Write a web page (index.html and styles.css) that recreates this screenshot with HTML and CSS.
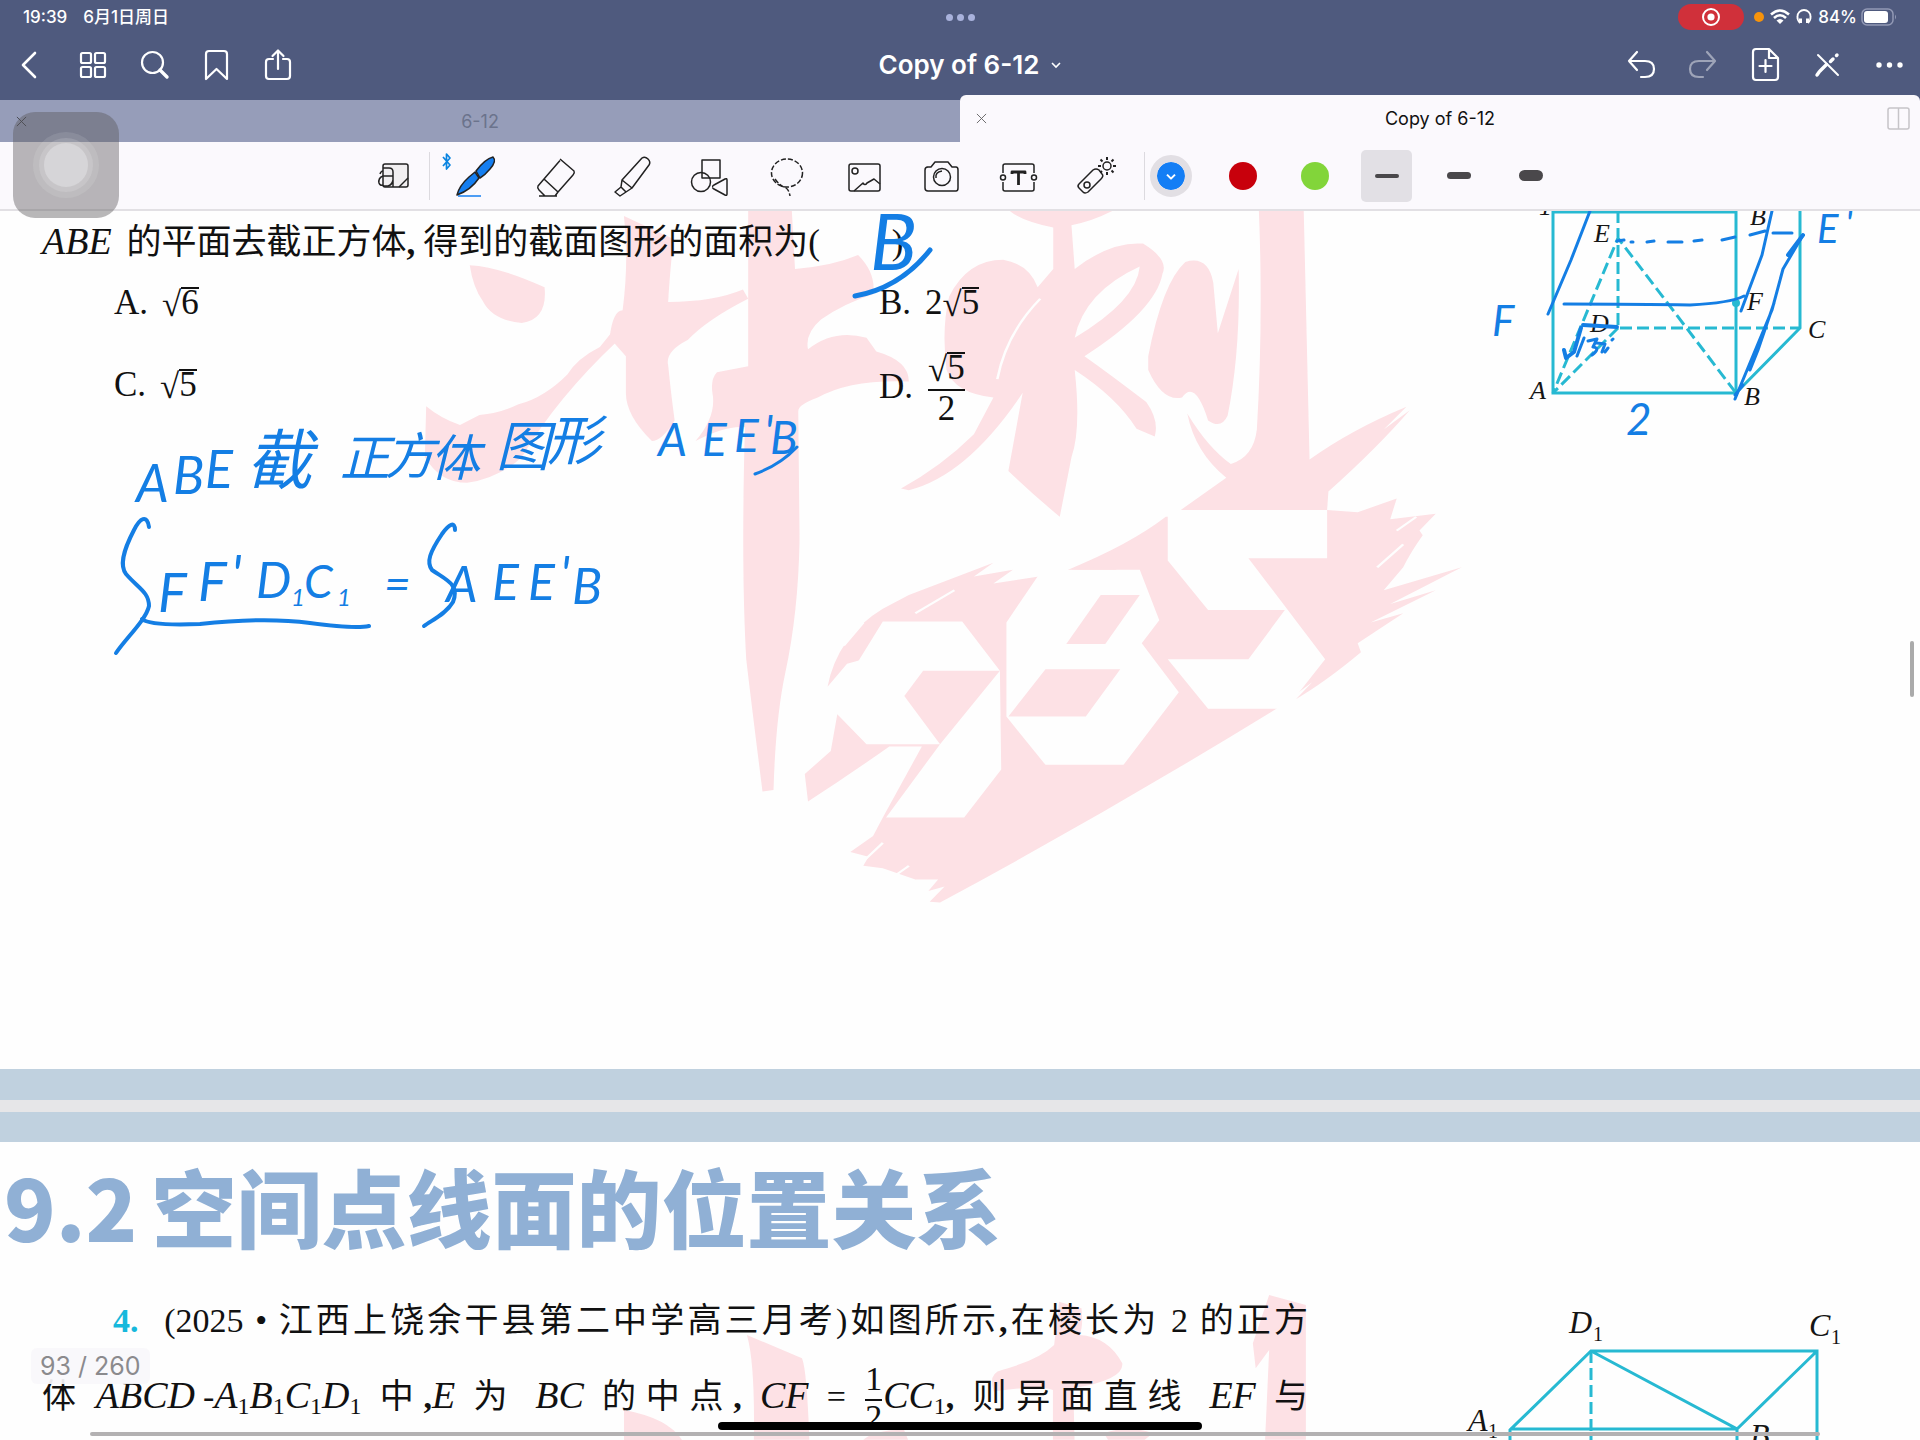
FILE: index.html
```html
<!DOCTYPE html>
<html lang="zh-CN">
<head>
<meta charset="utf-8">
<meta name="viewport" content="width=device-width, initial-scale=1">
<title>Copy of 6-12</title>
<link rel="stylesheet" href="styles.css">
</head>
<body>
<header class="top">
  <div class="status">
    <div class="status-left"><span>19:39</span><span>6月1日周日</span></div>
    <div class="multitask"><i></i><i></i><i></i></div>
    <div class="status-right">
      <span class="record"><svg width="20" height="20" viewBox="0 0 20 20"><circle cx="10" cy="10" r="8" fill="none" stroke="#fff" stroke-width="2"/><circle cx="10" cy="10" r="3.6" fill="#fff"/></svg></span>
      <i class="mic"></i>
      <svg width="20" height="16" viewBox="0 0 20 16" fill="none" stroke="#fff" stroke-width="2.6"><path d="M1 5.5Q10-2.500 19 5.500M4 9Q10 3.500 16 9"/><path d="M10 15L6.500 11.500Q10 8.500 13.500 11.500Z" fill="#fff" stroke="none"/></svg>
      <svg width="16" height="16" viewBox="0 0 16 16" fill="none" stroke="#fff" stroke-width="1.800"><path d="M4 14Q1 11 1.500 7.500A6.500 6.500 0 0 1 14.500 7.500Q15 11 12 14"/><path d="M4.500 9.500V14M11.500 9.500V14" stroke-width="3"/></svg>
      <span>84%</span>
      <svg width="36" height="18" viewBox="0 0 36 18"><rect x="1" y="1" width="31" height="16" rx="5" fill="none" stroke="#9299b5" stroke-width="1.500"/><rect x="3" y="3" width="24" height="12" rx="3" fill="#fff"/><path d="M34 6.500Q36 9 34 11.500Z" fill="#9299b5"/></svg>
    </div>
  </div>
  <nav class="nav">
    <div class="nav-group">
      <button type="button" aria-label="Back"><svg viewBox="0 0 36 36"><path d="M22 6L10 18L22 30" stroke-width="2.600"/></svg></button>
      <button type="button" aria-label="Thumbnails"><svg viewBox="0 0 36 36"><rect x="6" y="6" width="10" height="10" rx="1.500"/><rect x="20" y="6" width="10" height="10" rx="1.500"/><rect x="6" y="20" width="10" height="10" rx="1.500"/><rect x="20" y="20" width="10" height="10" rx="1.500"/></svg></button>
      <button type="button" aria-label="Search"><svg viewBox="0 0 36 36"><circle cx="15.500" cy="15.500" r="10.500"/><path d="M23 23L30 30" stroke-width="3.400"/></svg></button>
      <button type="button" aria-label="Bookmark"><svg viewBox="0 0 36 36"><path d="M7 32V7Q7 4 10 4H25Q28 4 28 7V32L17.500 22Z"/></svg></button>
      <button type="button" aria-label="Share"><svg viewBox="0 0 36 36"><path d="M12 12H8Q5 12 5 15V29Q5 32 8 32H26Q29 32 29 29V15Q29 12 26 12H22M17 22V4M11.500 9L17 3.500L22.500 9"/></svg></button>
    </div>
    <button type="button" class="title">Copy of 6-12<svg viewBox="0 0 12 12"><path d="M2 4L6 8L10 4"/></svg></button>
    <div class="nav-group nav-end">
      <button type="button" aria-label="Undo"><svg viewBox="0 0 36 36"><path d="M14 5L6 14L14 23M6 14H22Q31 14 31 22T22 30H18"/></svg></button>
      <button type="button" aria-label="Redo" disabled><svg viewBox="0 0 36 36"><path d="M22 5L30 14L22 23M30 14H14Q5 14 5 22T14 30H18"/></svg></button>
      <button type="button" aria-label="Add page"><svg viewBox="0 0 36 36"><path d="M9 2H22L31 11V30Q31 33 28 33H9Q6 33 6 30V5Q6 2 9 2ZM22 2V11H31M18.500 13V25M12.500 19H24.500"/></svg></button>
      <button type="button" aria-label="Read only"><svg viewBox="0 0 36 36"><path d="M9 8L29 28" stroke-width="2"/><path d="M8 28L10.500 24.500M11 24L17.500 17.500M21.500 14.500L24 12M27.500 8.500L28 8" stroke-width="3.400"/></svg></button>
      <button type="button" aria-label="More"><svg viewBox="0 0 36 36"><g class="solid"><circle cx="8" cy="18" r="2.700"/><circle cx="18.500" cy="18" r="2.700"/><circle cx="29" cy="18" r="2.700"/></g></svg></button>
    </div>
  </nav>
  <div class="tabs">
    <div class="tab"><button type="button" class="close" aria-label="Close tab"><svg viewBox="0 0 12 12"><path d="M1 1L11 11M11 1L1 11"/></svg></button><span>6-12</span></div>
    <div class="tab active"><button type="button" class="close" aria-label="Close tab"><svg viewBox="0 0 12 12"><path d="M1 1L11 11M11 1L1 11"/></svg></button><span>Copy of 6-12</span><button type="button" class="split" aria-label="Split view"><svg viewBox="0 0 24 24"><rect x="1" y="1" width="21" height="21" rx="2"/><path d="M11.500 1V22"/></svg></button></div>
  </div>
</header>

<div class="toolbar">
  <button type="button" class="zoombox" aria-label="Zoom window"><svg viewBox="0 0 44 44"><rect x="11" y="10" width="25" height="23" rx="2" fill="#f1eff1"/><path d="M36 24L27 33"/><path d="M11 14H17Q21 14 21 18V33M11 22H21M11 32H16Q20 31 21 26"/><path d="M11 22Q6 24 7 29Q8 32 11 31M8 20Q9 17 11 17"/></svg></button>
  <div class="tools">
    <button type="button" aria-label="Pen"><svg viewBox="0 0 60 48"><g transform="translate(-14 0)"><path d="M7 5L14 13L10.500 17V2L14 6L7 14" stroke="#0a84e0" stroke-width="1.700"/><g fill="#147ef0"><path d="M21 43Q23 34 33 25L39 20L43 26Q35 38 21 43Z"/><path d="M40 19Q49 7 57 5Q61 9 54 17Q49 23 44 26Z"/></g><path d="M22 44H45" stroke="#147ef0" stroke-width="1.500"/></g></svg></button>
    <button type="button" aria-label="Eraser"><svg viewBox="0 0 60 48"><path d="M33 7L47 19Q48 21 46 23L31 40L17 27L33 8.500M17 27L11 34Q10 36 12 38L18 44H28L31 40M12 44H30"/></svg></button>
    <button type="button" aria-label="Highlighter"><svg viewBox="0 0 60 48"><path d="M18 28L38 6Q41 4 44 7Q47 10 45 13L28 36ZM18 28L17 35L22 40L28 36M17 35L11 40L16 44L22 40"/></svg></button>
    <button type="button" aria-label="Shapes"><svg viewBox="0 0 60 48"><rect x="21" y="8" width="18" height="18"/><circle cx="20" cy="30" r="9.500"/><path d="M32 35Q31 34 33 33L44 27Q46 26 46 28V42Q46 44 44 43L33 37Q31 36 32 35"/></svg></button>
    <button type="button" aria-label="Lasso"><svg viewBox="0 0 60 48"><g stroke-dasharray="5 2"><ellipse cx="29" cy="21" rx="15.500" ry="14"/><path d="M17 27Q22 34 28 36Q31 38 32 44"/></g></svg></button>
    <button type="button" aria-label="Image"><svg viewBox="0 0 60 48"><rect x="14" y="12" width="31" height="27" rx="2"/><circle cx="20" cy="19" r="3"/><path d="M19 39L28 31Q30 34 32 31L39 27L45 32"/></svg></button>
    <button type="button" aria-label="Camera"><svg viewBox="0 0 60 48"><path d="M15 15H19L23 10H36L40 15H44Q46 15 46 18V36Q46 39 44 39H16Q13 39 13 36V18Q13 15 16 15Z"/><circle cx="30" cy="25" r="8.500"/><path d="M24 26Q23 20 30 19"/></svg></button>
    <button type="button" aria-label="Text"><svg viewBox="0 0 60 48"><path d="M14 21V14Q14 12 16 12H43Q45 12 45 14V21M14 30V37Q14 39 16 39H43Q45 39 45 37V30"/><circle cx="14" cy="25.500" r="2.500"/><circle cx="45" cy="25.500" r="2.500"/><path d="M23 22V20H36V22M29.500 20V33" stroke-width="2.800"/></svg></button>
    <button type="button" aria-label="Laser pointer"><svg viewBox="0 0 60 48"><path d="M13 32L27 18Q30 16 33 18L36 22Q38 24 35 27L22 40Q19 42 17 40L13 36Q11 34 13 32Z"/><circle cx="21" cy="33" r="3"/><circle cx="41" cy="14" r="4"/><path d="M41 5V8M41 20V23M32 14H35M47 14H50M34.500 7.500L36.500 9.500M45.500 18.500L47.500 20.500M47.500 7.500L45.500 9.500M36 19L34.500 20.500" stroke-width="2"/></svg></button>
  </div>
  <div class="pens">
    <button type="button" aria-label="Blue"><span class="dot blue"><svg viewBox="0 0 12 12"><path d="M3 5L6 8L9 5"/></svg></span></button>
    <button type="button" aria-label="Red"><span class="dot red"></span></button>
    <button type="button" aria-label="Green"><span class="dot green"></span></button>
    <button type="button" aria-label="Thin"><span class="width-box"><i class="thin"></i></span></button>
    <button type="button" aria-label="Medium"><i class="medium"></i></button>
    <button type="button" aria-label="Thick"><i class="thick"></i></button>
  </div>
</div>

<main class="canvas">
  <article class="page page-one">
    <svg class="layer" viewBox="0 211 1920 858" width="1920" height="858" aria-hidden="true">
      <g transform="translate(460 200) scale(.6505 .4592)" fill="#fde1e5">
        <path d="M15 142Q60 145 130 190Q135 260 95 268Q50 262 35 220Q20 190 15 142ZM232 290L215 320Q180 345 165 380Q130 430 90 445Q60 465 30 468L0 490Q-30 475-52 449L-54 560Q-30 616 11 616Q60 605 95 560Q150 430 240 310Z"/>
        <path d="M252 35L328 85Q322 170 320 222Q390 222 435 195L443 215Q380 260 350 305Q315 330 320 360Q325 430 330 480Q310 525 295 525Q255 470 255 420V340L230 300Q235 240 250 240Q260 130 252 35Z"/>
        <path d="M443 20H510L515 150Q570 145 612 120Q640 160 635 205Q590 225 555 260Q530 290 535 325Q575 280 625 300L640 330Q690 350 690 395Q600 390 550 430Q520 445 520 460L522 740Q520 900 500 1030Q485 1130 482 1285L465 1288Q450 1120 440 1000Q432 800 438 495Q410 490 362 525Q395 470 388 420Q385 390 395 375L443 362Z"/>
        <path fill-rule="evenodd" d="M842 20H1008Q975 45 940 55L945 150Q1000 90 1050 95Q1090 130 1080 160Q1070 240 960 340Q1000 380 1055 440Q1075 480 1068 515L1040 498Q1010 430 945 370Q955 500 940 560L922 690Q880 640 843 590L865 420Q780 600 690 632L678 628Q740 580 790 510L820 430Q760 420 748 370Q740 280 752 210Q780 130 835 130Q875 140 888 190L912 150V60Q860 45 842 20ZM945 300Q960 200 1045 145Q1040 220 945 300Z"/>
        <path d="M1058 340Q1080 180 1115 135Q1150 120 1158 180L1165 290L1197 150Q1200 330 1180 470Q1170 500 1150 480Q1130 390 1110 430Q1080 440 1058 370ZM1228 20H1297L1306 565Q1370 500 1455 450L1420 500L1460 458Q1410 540 1335 635L1333 675H1108L1178 605Q1130 550 1118 465Q1150 540 1185 575Q1220 560 1225 500Q1235 260 1228 20Z"/>
        <path d="M1333 675L1380 680L1440 650L1430 695L1500 683L1475 720L1480 730Q1460 770 1450 800L1420 850L1540 800L1430 880L1500 850L1400 920L1450 900L1380 965L1385 985Q1330 1050 1285 1087L1310 1050L1255 1108Q1000 1330 738 1530L722 1528L745 1495L720 1505L735 1480L700 1480L650 1455L620 1450L628 1430L600 1420L635 1385L650 1345L710 1190H660Q600 1250 535 1310L530 1250L570 1200L580 1120L625 1185L620 1000L595 1010L565 1060Q580 950 650 890L690 860L820 790L790 820L850 805L820 835L890 820L870 860L935 805Q1030 750 1085 690Z"/>
        <path fill="#fefefe" d="M1088 675H1333V780H1212L1330 1000L1270 1108H1150L1088 1000H1212L1268 893H1150L1088 785ZM650 918H772L830 1025H712L683 1080L738 1185H625L575 1090ZM830 1025L832 1240L775 1345H655L738 1185ZM895 805H1045L1075 915L1048 965L1105 1072L1020 1230H900L840 1125V920Z"/>
        <path d="M985 860H1045L992 967H932ZM900 1022H1015L962 1125H843ZM935 805H1010L1000 798Z"/>
        <path d="M892 215Q840 290 826 390M905 60V150M1390 985L1440 925M1410 800L1450 750M1440 720L1470 690M650 1400L620 1440M690 1450L660 1480M700 900L760 850M590 970L620 920" fill="none" stroke="#fefefe" stroke-width="4"/>
      </g>
    </svg>
    <div class="columns">
      <section class="question">
        <p class="lead"><em>ABE</em> 的平面去截正方体<b>,</b>得到的截面图形的面积为(<span class="blank"></span>).</p>
        <ul class="options">
          <li>A. <math><msqrt><mn>6</mn></msqrt></math></li>
          <li>B. <math><mn>2</mn><msqrt><mn>5</mn></msqrt></math></li>
          <li>C. <math><msqrt><mn>5</mn></msqrt></math></li>
          <li>D. <math displaystyle="true"><mfrac><msqrt><mn>5</mn></msqrt><mn>2</mn></mfrac></math></li>
        </ul>
      </section>
      <svg class="figure" viewBox="1460 211 460 240" width="460" height="240">
        <g class="edge"><path d="M1553 212H1736V393H1553ZM1736 393L1800 328V211"/><path class="dash" d="M1618 211V328H1800M1618 328L1553 393L1618 238L1736 393"/></g>
        <circle cx="1736" cy="303" r="4" fill="#27b9d2"/>
        <g class="label"><text x="1594" y="242">E</text><text x="1750" y="225">B</text><text x="1747" y="310">F</text><text x="1808" y="338">C</text><text x="1590" y="332">D</text><text x="1530" y="399">A</text><text x="1744" y="405">B</text><text x="1539" y="215">1</text></g>
      </svg>
    </div>
    <svg class="layer ink" viewBox="0 211 1920 858" width="1920" height="858">
      <g class="hand">
        <text x="870" y="270" font-size="78">B</text>
        <text x="136 173 205" y="502 494 488" font-size="52">ABE</text>
        <text x="246" y="484" font-size="66">截</text>
        <text x="340 385 430" y="476 474 476" font-size="50">正方体</text>
        <text x="496 547" y="466 460" font-size="54">图形</text>
        <text x="658 702 734 764 770" y="456 456 452 448 454" font-size="46">AEE'B</text>
        <text x="158 198 231" y="612 601 594" font-size="54">FF'</text>
        <text x="256" y="598" font-size="50">D</text>
        <text x="291 337" y="606" font-size="24">11</text>
        <text x="304" y="598" font-size="46">C</text>
        <text x="384" y="600" font-size="46">=</text>
        <text x="446 492 528 560 572" y="602 600 600 592 604" font-size="50">AEE'B</text>
        <text x="1492" y="336" font-size="42">F</text>
        <text x="1817 1845" y="243 238" font-size="40">E'</text>
        <text x="1626" y="435" font-size="44">2</text>
      </g>
      <g class="stroke">
        <path d="M855 296Q900 288 930 250" stroke-width="5"/>
        <path d="M149 527C147 514 140 518 134 530C122 553 120 566 126 574C138 588 149 592 149 606C146 620 126 638 116 653"/>
        <path d="M142 619Q150 626 200 624Q265 617 310 623T369 626"/>
        <path d="M455 530C455 521 449 524 442 534C430 552 426 562 432 570C446 580 460 584 453 602C446 614 432 620 424 626"/>
        <path d="M797 447Q780 465 755 474M1590 211L1571 260L1548 314M1564 304Q1640 304 1690 305Q1730 303 1744 296M1772 211L1762 255L1741 311M1803 235L1783 269L1772 310L1735 399M1774 303L1758 350L1750 370M1743 385L1735 395M1750 235L1765 231M1722 240L1735 237" stroke-width="3"/>
        <path d="M1803 235L1788 255M1583 325L1617 327M1581 328L1574 352L1566 358L1564 350" stroke-width="4"/>
        <path d="M1617 241L1624 240M1631 242H1633M1647 242L1654 241M1668 242H1682M1694 241L1702 240M1773 233H1792M1584 338L1577 356M1588 341L1597 339L1593 347Q1601 348 1592 355M1597 343L1605 344L1602 352M1608 348L1605 352M1612 340L1613 339" stroke-width="3"/>
      </g>
    </svg>
  </article>

  <article class="page page-two">
    <svg class="layer" viewBox="0 1142 1920 298" width="1920" height="298" aria-hidden="true">
      <g fill="#fde1e5"><path transform="translate(700 1270) scale(.408 .333)" d="M115 195L250 265Q262 300 268 510H132Q135 280 115 195ZM880 95L935 115Q940 170 930 195Q1000 200 1035 280Q1040 330 915 355L918 510H865V360Q830 345 720 365Q705 310 740 300Q830 270 868 225ZM1395 75L1485 105V510H1385L1395 240L1362 295L1355 220ZM400 510Q430 480 500 480L510 510ZM990 490Q1050 465 1110 490L1090 510H1000Z"/><path d="M624 1410Q668 1418 682 1440H624Z"/></g>
    </svg>
    <h1><span>9.2</span><span>空间点线面的位置关系</span></h1>
    <div class="columns">
      <section class="question body">
        <p class="first"><strong>4.</strong> (2025 • 江西上饶余干县第二中学高三月考)如图所示<b>,</b>在棱长为 2 的正方</p>
        <p>体<em class="solid-name">ABCD</em>-<em>A</em><sub>1</sub><em>B</em><sub>1</sub><em>C</em><sub>1</sub><em>D</em><sub>1</sub> 中<b>,</b><em>E</em> 为 <em>BC</em> 的中点<b>,</b> <em>CF</em> = <math displaystyle="true"><mfrac><mn>1</mn><mn>2</mn></mfrac></math><em>CC</em><sub>1</sub><b>,</b> 则异面直线 <em>EF</em> 与</p>
      </section>
      <svg class="figure" viewBox="1420 1283 500 157" width="500" height="157">
        <g class="edge"><path d="M1510 1440V1430L1591 1351H1817V1440M1510 1429H1737L1817 1351M1591 1351L1737 1429V1440"/><path class="dash" d="M1591 1351V1440"/></g>
        <g class="label big"><text x="1569" y="1333">D</text><text x="1809" y="1336">C</text><text x="1468" y="1431">A</text><text x="1750" y="1446">B</text></g>
        <g class="label small"><text x="1593" y="1341">1</text><text x="1831" y="1344">1</text><text x="1488" y="1438">1</text></g>
      </svg>
    </div>
  </article>
  <div class="page-count">93 / 260</div>
  <i class="scroll-y"></i>
  <i class="scroll-x"></i>
</main>
<i class="home"></i>
<button type="button" class="assistive" aria-label="AssistiveTouch"><i></i></button>
</body>
</html>
```
FILE: styles.css
```css
* { box-sizing: border-box; }
body {
  margin: 0;
  height: 100vh;
  display: flex;
  flex-direction: column;
  overflow: hidden;
  background: #fefefe;
  color: #111;
  font-family: Inter, "Noto Sans CJK SC", sans-serif;
}
button {
  padding: 0;
  border: 0;
  background: none;
  color: inherit;
  font: inherit;
  display: flex;
  align-items: center;
  justify-content: center;
}
svg { fill: none; flex: none; }

.top { background: #4f5a7e; color: #fff; flex: none; }
.status {
  height: 34px;
  display: grid;
  grid-template-columns: 1fr auto 1fr;
  align-items: center;
  padding: 0 23px;
  font-size: 17px;
  font-weight: 500;
  line-height: 24px;
}
.status-left { display: flex; align-items: baseline; gap: 16px; }
.multitask { display: flex; gap: 4px; }
.multitask i { width: 7px; height: 7px; border-radius: 50%; background: #a9b2dc; }
.status-right { display: flex; justify-content: flex-end; align-items: center; gap: 6px; }
.status-right span + svg { margin-left: -2px; }
.record {
  width: 66px;
  height: 26px;
  margin-right: 4px;
  border-radius: 13px;
  background: #d0303a;
  display: flex;
  align-items: center;
  justify-content: center;
}
.mic { width: 10px; height: 10px; border-radius: 50%; background: #f7930b; }

.nav { height: 61px; display: grid; grid-template-columns: 1fr auto 1fr; align-items: center; }
.nav-group { display: flex; }
.nav-end { justify-content: flex-end; }
.nav-group button { width: 62px; height: 61px; }
.nav-group svg { width: 36px; height: 36px; stroke: #fff; stroke-width: 2.2; stroke-linecap: round; stroke-linejoin: round; }
.nav-group button:disabled { opacity: .45; }
.nav .solid { fill: #fff; stroke: none; }
.title { gap: 10px; padding-left: 20px; font-size: 26px; font-weight: 600; }
.title svg { width: 12px; height: 12px; stroke: #fff; stroke-width: 1.6; }

.tabs { display: grid; grid-template-columns: 1fr 1fr; align-items: end; }
.tab {
  position: relative;
  height: 42px;
  display: flex;
  align-items: center;
  justify-content: center;
  background: #969db9;
  color: #6b738c;
  font-size: 18px;
}
.tab.active { height: 47px; background: #fbf9fd; color: #111; border-radius: 6px 6px 0 0; }
.close { position: absolute; left: 15px; top: 0; bottom: 0; width: 12px; color: #222; }
.close svg { width: 11px; height: 11px; stroke: currentColor; opacity: .7; }
.split { position: absolute; right: 9px; top: 0; bottom: 0; width: 24px; }
.split svg { width: 24px; height: 24px; stroke: #c6c4c8; stroke-width: 1.5; }

.toolbar {
  flex: none;
  height: 69px;
  display: flex;
  justify-content: center;
  padding-left: 4px;
  background: #fbf9fd;
  border-bottom: 2px solid #e2e0e4;
}
.toolbar svg { stroke: #222; stroke-width: 1.5; stroke-linejoin: round; overflow: visible; }
.zoombox { width: 72px; position: relative; }
.zoombox svg { width: 44px; height: 44px; }
.zoombox::after, .pens::before { content: ""; position: absolute; top: 10px; height: 48px; width: 1px; background: #dcdadf; }
.zoombox::after { right: 0; }
.pens::before { left: 9px; }
.tools { display: flex; margin-left: 12px; }
.tools button { width: 77px; }
.tools svg { width: 60px; height: 48px; }
.pens { display: flex; position: relative; }
.pens button { width: 72px; }
.dot { width: 28px; height: 28px; border-radius: 50%; }
.blue { background: #147ef5; outline: 7px solid #e2dfe4; display: flex; align-items: center; justify-content: center; }
.blue svg { width: 16px; height: 16px; stroke: #fff; }
.red { background: #c8000c; }
.green { background: #82d53a; }
.width-box { width: 51px; height: 52px; border-radius: 5px; background: #e2e0e5; display: flex; align-items: center; justify-content: center; }
.pens i { width: 24px; border-radius: 6px; background: #4a484b; }
.thin { height: 4px; }
.medium { height: 7px; }
.thick { height: 11px; }

.canvas { position: relative; flex: 1; min-height: 0; overflow: hidden; background: #e6e6e8; }
.page { position: relative; background: #fefefe; font-family: "Liberation Serif", "Noto Sans CJK SC", serif; }
.page-one { min-height: 889px; border-bottom: 31px solid #c0d1df; }
.page-two { min-height: 400px; margin-top: 12px; border-top: 30px solid #c0d1df; }
.layer { position: absolute; left: 0; top: 0; }
.columns { position: relative; display: flex; justify-content: space-between; }
.question { font-size: 35px; }
.question p { margin: 0; }
.question em { font-size: 38px; }
.lead { padding-left: 42px; line-height: 60px; white-space: nowrap; }
.lead em { margin-right: 6px; }
.lead b { margin-right: 8px; }
.blank { display: inline-block; width: 72px; }
.options {
  list-style: none;
  margin: 0;
  padding: 0 0 0 114px;
  display: grid;
  grid-template-columns: 765px auto;
  grid-template-rows: 60px 104px;
  align-items: center;
}
.options li { display: flex; align-items: baseline; gap: 14px; }
math { font-family: "Liberation Serif", serif; }
mfrac > :first-child { padding-bottom: 4px; }
.edge { stroke: #27b9d2; stroke-width: 3; }
.edge .dash { stroke-dasharray: 12 5; }
.label { fill: #151515; font: italic 26px "Liberation Serif", serif; }
.label.big { font-size: 32px; }
.label.small { font-size: 20px; font-style: normal; }
.hand { fill: #147ee4; font-family: Lato, "Noto Sans CJK SC", sans-serif; font-style: italic; }
.stroke { stroke: #147ee4; stroke-width: 4; stroke-linecap: round; stroke-linejoin: round; }

h1 {
  position: relative;
  margin: 0;
  padding: 21px 0 0 4px;
  display: flex;
  gap: 14px;
  color: #90b0d5;
  font: 900 85px/84px "Noto Sans CJK SC", sans-serif;
}
.page-two .columns { margin-top: 36px; }
.body { width: 1266px; margin-left: 42px; font-size: 34px; }
.body p { height: 75px; line-height: 75px; text-align: justify; text-align-last: justify; white-space: nowrap; }
.body .first { padding-left: 71px; }
.body strong { color: #16b8dc; margin-right: 14px; }
.body .solid-name { margin: 0 8px 0 10px; }
.body sub { font-size: 24px; line-height: 1; vertical-align: -6px; }

.page-count {
  position: absolute;
  left: 31px;
  bottom: 56px;
  padding: 0 9px;
  border-radius: 6px;
  background: rgba(249, 248, 251, .93);
  color: #8b8a8d;
  font-size: 25px;
  line-height: 36px;
}
.scroll-y { position: absolute; right: 6px; top: 430px; width: 4px; height: 56px; border-radius: 2px; background: #aaa; }
.scroll-x { position: absolute; left: 90px; right: 100px; bottom: 4px; height: 4px; border-radius: 2px; background: #b3b1b2; }
.home { position: fixed; left: 50%; bottom: 10px; width: 484px; height: 8px; margin-left: -242px; border-radius: 4px; background: #000; }
.assistive {
  position: fixed;
  left: 13px;
  top: 112px;
  width: 106px;
  height: 106px;
  border-radius: 22px;
  background: rgba(88, 86, 88, .42);
}
.assistive i { width: 44px; height: 44px; border-radius: 50%; background: #d6d5d8; box-shadow: 0 0 0 5px rgba(255, 255, 255, .14), 0 0 0 11px rgba(255, 255, 255, .1); }
```
